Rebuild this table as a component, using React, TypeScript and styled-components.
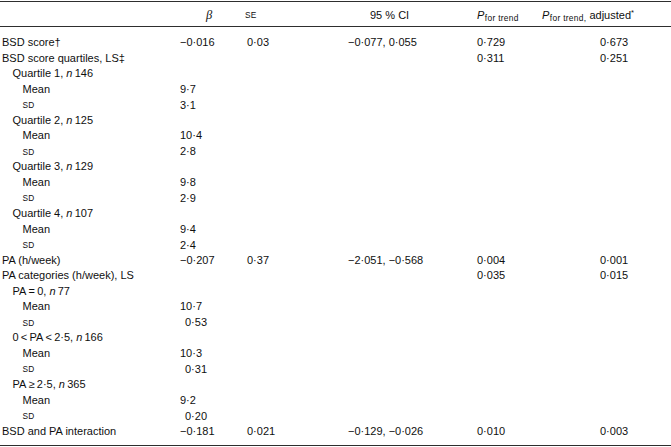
import React from "react";
import styled, { createGlobalStyle } from "styled-components";

const Global = createGlobalStyle`
  html, body { margin: 0; padding: 0; background: #ffffff; }
  body { font-family: "Liberation Sans", Arial, sans-serif; color: #0f0f0f; }
`;

const COLS = "180px 65px 103px 129px 65px 129px";

const Table = styled.div`
  width: 671px;
  margin-top: 1px;
  border-top: 1px solid #2e2e2e;
  border-bottom: 1px solid #2e2e2e;
  font-size: 11px;
`;

const HeadRow = styled.div`
  display: grid;
  grid-template-columns: ${COLS};
  height: 23px;
  align-items: center;
  border-bottom: 1px solid #2e2e2e;
  padding-top: 1px;
  box-sizing: content-box;
`;

const HeadCell = styled.div<{ $pad?: number }>`
  padding-left: ${(p) => p.$pad ?? 0}px;
  white-space: nowrap;
  line-height: 14px;
`;

const Body = styled.div`
  padding: 8px 0 6px;
`;

const Row = styled.div`
  display: grid;
  grid-template-columns: ${COLS};
  height: 15.56px;
  line-height: 15.56px;
  align-items: center;
`;

const Label = styled.div<{ $level: number }>`
  padding-left: ${(p) => [2, 12.5, 22.5][p.$level]}px;
  white-space: nowrap;
`;

const Value = styled.div<{ $pad?: number }>`
  padding-left: ${(p) => p.$pad ?? 0}px;
  white-space: nowrap;
`;

const SmallCaps = styled.span`
  font-size: 8.3px;
  letter-spacing: 0.2px;
`;

const Ital = styled.i`
  font-style: italic;
`;

const Beta = styled.i`
  font-family: "Liberation Serif", "Times New Roman", serif;
  font-style: italic;
  font-size: 12.5px;
`;

const Sub = styled.sub`
  font-size: 8.4px;
  letter-spacing: 0.3px;
  vertical-align: -2px;
  line-height: 0;
  margin-left: 0.5px;
`;

const Sup = styled.sup`
  font-size: 7.5px;
  vertical-align: 4px;
  line-height: 0;
`;

type R = {
  label: React.ReactNode;
  level: 0 | 1 | 2;
  beta?: string;
  betaShift?: boolean;
  se?: string;
  ci?: string;
  p?: string;
  padj?: string;
};

const N = ({ v }: { v: string }) => (
  <>
    <Ital>n</Ital>
    {"\u2009" + v}
  </>
);

const SD = <SmallCaps>SD</SmallCaps>;

const rows: R[] = [
  { label: "BSD score\u2020", level: 0, beta: "\u22120\u00b7016", se: "0\u00b703", ci: "\u22120\u00b7077, 0\u00b7055", p: "0\u00b7729", padj: "0\u00b7673" },
  { label: "BSD score quartiles, LS\u2021", level: 0, p: "0\u00b7311", padj: "0\u00b7251" },
  { label: <>Quartile 1, <N v="146" /></>, level: 1 },
  { label: "Mean", level: 2, beta: "9\u00b77" },
  { label: SD, level: 2, beta: "3\u00b71" },
  { label: <>Quartile 2, <N v="125" /></>, level: 1 },
  { label: "Mean", level: 2, beta: "10\u00b74" },
  { label: SD, level: 2, beta: "2\u00b78" },
  { label: <>Quartile 3, <N v="129" /></>, level: 1 },
  { label: "Mean", level: 2, beta: "9\u00b78" },
  { label: SD, level: 2, beta: "2\u00b79" },
  { label: <>Quartile 4, <N v="107" /></>, level: 1 },
  { label: "Mean", level: 2, beta: "9\u00b74" },
  { label: SD, level: 2, beta: "2\u00b74" },
  { label: "PA (h/week)", level: 0, beta: "\u22120\u00b7207", se: "0\u00b737", ci: "\u22122\u00b7051, \u22120\u00b7568", p: "0\u00b7004", padj: "0\u00b7001" },
  { label: "PA categories (h/week), LS", level: 0, p: "0\u00b7035", padj: "0\u00b7015" },
  { label: <>PA{"\u2009=\u2009"}0, <N v="77" /></>, level: 1 },
  { label: "Mean", level: 2, beta: "10\u00b77" },
  { label: SD, level: 2, beta: "0\u00b753", betaShift: true },
  { label: <>0{"\u2009<\u2009"}PA{"\u2009<\u2009"}2{"\u00b7"}5, <N v="166" /></>, level: 1 },
  { label: "Mean", level: 2, beta: "10\u00b73" },
  { label: SD, level: 2, beta: "0\u00b731", betaShift: true },
  { label: <>PA{"\u2009\u2265\u2009"}2{"\u00b7"}5, <N v="365" /></>, level: 1 },
  { label: "Mean", level: 2, beta: "9\u00b72" },
  { label: SD, level: 2, beta: "0\u00b720", betaShift: true },
  { label: "BSD and PA interaction", level: 0, beta: "\u22120\u00b7181", se: "0\u00b7021", ci: "\u22120\u00b7129, \u22120\u00b7026", p: "0\u00b7010", padj: "0\u00b7003" },
];

export default function App() {
  return (
    <>
      <Global />
      <Table>
        <HeadRow>
          <HeadCell />
          <HeadCell $pad={26}>
            <Beta>β</Beta>
          </HeadCell>
          <HeadCell $pad={0}>
            <SmallCaps>SE</SmallCaps>
          </HeadCell>
          <HeadCell $pad={22}>95 % CI</HeadCell>
          <HeadCell $pad={0}>
            <Ital>P</Ital>
            <Sub>for trend</Sub>
          </HeadCell>
          <HeadCell $pad={0}>
            <Ital>P</Ital>
            <Sub>for trend,</Sub> adjusted<Sup>*</Sup>
          </HeadCell>
        </HeadRow>
        <Body>
          {rows.map((r, i) => (
            <Row key={i}>
              <Label $level={r.level}>{r.label}</Label>
              <Value $pad={r.betaShift ? 5 : 0}>{r.beta}</Value>
              <Value $pad={2}>{r.se}</Value>
              <Value>{r.ci}</Value>
              <Value>{r.p}</Value>
              <Value $pad={58}>{r.padj}</Value>
            </Row>
          ))}
        </Body>
      </Table>
    </>
  );
}
